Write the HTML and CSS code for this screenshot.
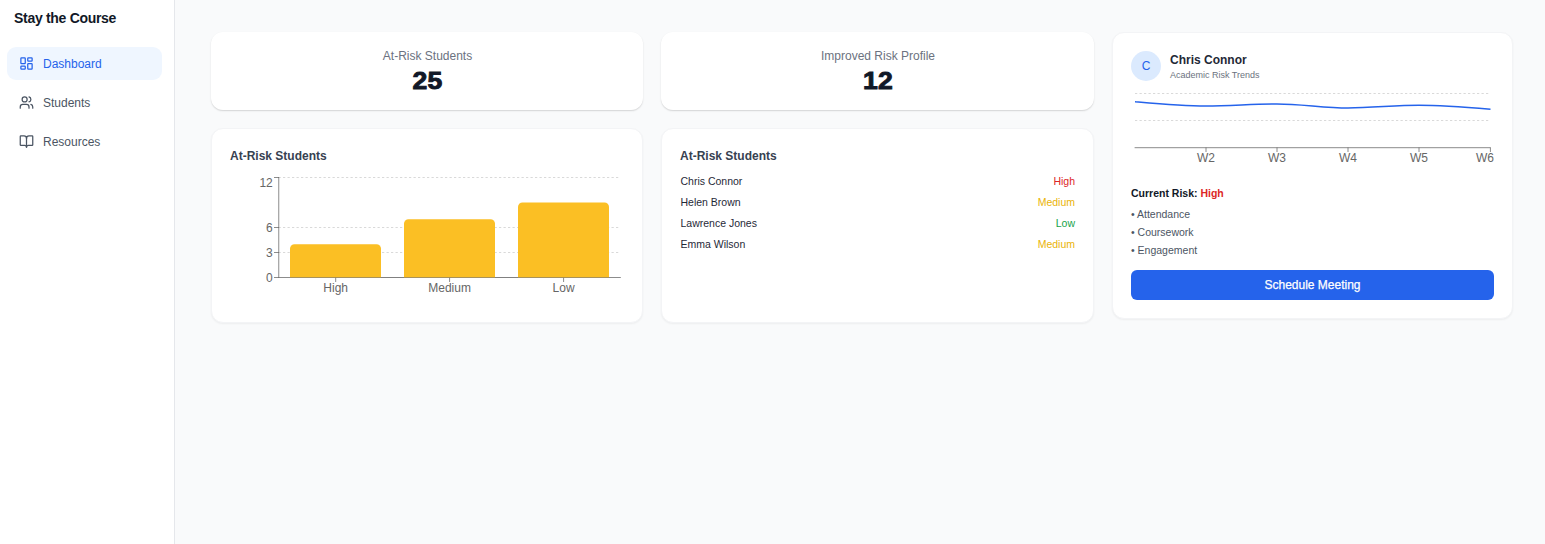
FILE: index.html
```html
<!DOCTYPE html>
<html lang="en">
<head>
<meta charset="utf-8">
<title>Stay the Course</title>
<link rel="stylesheet" href="styles.css">
</head>
<body>
<div class="app">
  <aside class="sidebar">
    <h1 class="brand">Stay the Course</h1>
    <nav class="nav">
      <a class="nav-item active">
        <svg class="icon" viewBox="0 0 24 24"><rect x="3" y="3" width="7" height="9" rx="1"/><rect x="14" y="3" width="7" height="5" rx="1"/><rect x="14" y="12" width="7" height="9" rx="1"/><rect x="3" y="16" width="7" height="5" rx="1"/></svg>
        <span>Dashboard</span>
      </a>
      <a class="nav-item">
        <svg class="icon" viewBox="0 0 24 24"><path d="M16 21v-2a4 4 0 0 0-4-4H6a4 4 0 0 0-4 4v2"/><circle cx="9" cy="7" r="4"/><path d="M22 21v-2a4 4 0 0 0-3-3.87"/><path d="M16 3.13a4 4 0 0 1 0 7.75"/></svg>
        <span>Students</span>
      </a>
      <a class="nav-item">
        <svg class="icon" viewBox="0 0 24 24"><path d="M12 7v14"/><path d="M3 18a1 1 0 0 1-1-1V4a1 1 0 0 1 1-1h5a4 4 0 0 1 4 4 4 4 0 0 1 4-4h5a1 1 0 0 1 1 1v13a1 1 0 0 1-1 1h-6a3 3 0 0 0-3 3 3 3 0 0 0-3-3z"/></svg>
        <span>Resources</span>
      </a>
    </nav>
  </aside>
  <main class="main">
    <div class="overview">
      <section class="stat">
        <div class="stat-label">At-Risk Students</div>
        <div class="stat-value">25</div>
      </section>
      <section class="stat">
        <div class="stat-label">Improved Risk Profile</div>
        <div class="stat-value">12</div>
      </section>
      <section class="card">
        <h2 class="card-title">At-Risk Students</h2>
        <svg class="bar-chart" viewBox="230 170 395 130">
          <g class="grid">
            <path d="M278.5 177.5H620.5M278.5 227.5H620.5M278.5 252.5H620.5"/>
          </g>
          <g class="axis">
            <path d="M278.75 177V278M274 177.5H279M274 227.5H279M274 252.5H279M274 277.5H620.8M335.7 277.5V282M449.6 277.5V282M563.6 277.5V282"/>
          </g>
          <g class="bars">
            <path d="M290 277.5V248.75a4.5 4.5 0 0 1 4.5-4.5H376.5a4.5 4.5 0 0 1 4.5 4.5V277.5z"/>
            <path d="M404 277.5V223.75a4.5 4.5 0 0 1 4.5-4.5H490.5a4.5 4.5 0 0 1 4.5 4.5V277.5z"/>
            <path d="M518 277.5V207a4.5 4.5 0 0 1 4.5-4.5H604.5a4.5 4.5 0 0 1 4.5 4.5V277.5z"/>
          </g>
          <path class="base" d="M290 277.5H609"/>
          <g class="ticks end">
            <text x="272.8" y="187">12</text><text x="272.8" y="232">6</text><text x="272.8" y="257">3</text><text x="272.8" y="282">0</text>
          </g>
          <g class="ticks mid">
            <text x="335.7" y="292">High</text><text x="449.6" y="292">Medium</text><text x="563.6" y="292">Low</text>
          </g>
        </svg>
      </section>
      <section class="card">
        <h2 class="card-title">At-Risk Students</h2>
        <ul class="students">
          <li><span>Chris Connor</span><span class="high">High</span></li>
          <li><span>Helen Brown</span><span class="medium">Medium</span></li>
          <li><span>Lawrence Jones</span><span class="low">Low</span></li>
          <li><span>Emma Wilson</span><span class="medium">Medium</span></li>
        </ul>
      </section>
    </div>
    <section class="card profile">
      <header class="profile-head">
        <div class="avatar">C</div>
        <div>
          <div class="profile-name">Chris Connor</div>
          <div class="profile-sub">Academic Risk Trends</div>
        </div>
      </header>
      <svg class="line-chart" viewBox="1131 90 365 78">
        <path class="grid" d="M1135 93.5H1490.5M1135 120.5H1490.5"/>
        <path class="axis" d="M1134.6 147.7H1490.6M1206 147.5V152M1277 147.5V152M1348 147.5V152M1419 147.5V152M1490.4 147.5V152"/>
        <path class="trend" d="M1135 101.7C1158.7 103.8 1182.3 106 1206 106C1229.7 106 1253.3 104 1277 104C1300.7 104 1324.3 108 1348 108C1371.7 108 1395.3 105.2 1419 105.2C1442.7 105.2 1466.7 107.2 1490.5 109.2"/>
        <g class="ticks mid">
          <text x="1206" y="162">W2</text><text x="1277" y="162">W3</text><text x="1348" y="162">W4</text><text x="1419" y="162">W5</text><text x="1485" y="162">W6</text>
        </g>
      </svg>
      <div class="risk">Current Risk: <span class="high">High</span></div>
      <ul class="factors">
        <li>• Attendance</li>
        <li>• Coursework</li>
        <li>• Engagement</li>
      </ul>
      <button class="button">Schedule Meeting</button>
    </section>
  </main>
</div>
</body>
</html>
```
FILE: styles.css
```css
* { box-sizing: border-box; margin: 0; padding: 0; }
body { font-family: "Liberation Sans", Arial, sans-serif; font-size: 12px; line-height: 18px; color: #111827; }
ul { list-style: none; }
.app { display: flex; height: 544px; background: #f9fafb; overflow: hidden; }
.sidebar { width: 175px; flex: none; background: #fff; border-right: 1px solid #e5e7eb; padding: 8px 12px 0 7px; }
.brand { font-size: 14px; line-height: 21px; padding-left: 7px; letter-spacing: -0.3px; }
.nav { display: flex; flex-direction: column; gap: 6px; margin-top: 18px; }
.nav-item { display: flex; align-items: center; gap: 9px; height: 33px; padding: 0 12px; border-radius: 9px; color: #4b5563; }
.nav-item.active { background: #eff6ff; color: #2563eb; }
.icon { width: 15px; height: 15px; fill: none; stroke: currentColor; stroke-width: 2; stroke-linecap: round; stroke-linejoin: round; }
.main { flex: 1; display: flex; align-items: flex-start; gap: 19px; padding: 32px 32px 0 36px; }
.overview { width: 883px; flex: none; display: grid; grid-template-columns: 432px 433px; grid-template-rows: 78px 195px; gap: 18px; }
.stat { background: #fff; border-radius: 12px; box-shadow: 0 1px 2px rgba(0,0,0,.1), 0 1px 1px rgba(0,0,0,.06); text-align: center; padding-top: 15px; }
.stat-label { color: #6b7280; padding-left: 1px; }
.stat-value { font-weight: 700; font-size: 23.5px; line-height: 33px; letter-spacing: .3px; padding-left: 1px; -webkit-text-stroke: .9px #111827; transform: scaleX(1.13); }
.card { background: #fff; border: 1px solid #f3f4f6; border-radius: 12px; box-shadow: 0 1px 2px rgba(0,0,0,.05); padding: 18px; }
.card-title { font-size: 12px; line-height: 18px; color: #374151; }
.bar-chart { display: block; width: 395px; height: 130px; margin-top: 5px; }
.grid { fill: none; stroke: #ccc; stroke-width: .75; stroke-dasharray: 2.25 2.25; }
.axis { fill: none; stroke: #666; stroke-width: .75; }
.bars { fill: #fbbf24; }
.base { stroke: #666; stroke-width: .75; opacity: .4; }
.ticks { fill: #666; font-size: 12px; }
.end { text-anchor: end; }
.mid { text-anchor: middle; }
.students { margin-top: 9px; padding-left: .5px; font-size: 10.5px; line-height: 15px; color: #1f2937; }
.students li { display: flex; justify-content: space-between; margin-bottom: 6px; }
.high { color: #dc2626; }
.medium { color: #eab308; }
.low { color: #16a34a; }
.profile { width: 401px; flex: none; height: 287px; margin-left: -1px; padding: 18px 17px 17px 18px; }
.profile-head { display: flex; gap: 9px; align-items: center; height: 30px; }
.avatar { width: 30px; height: 30px; border-radius: 50%; background: #dbeafe; color: #2563eb; text-align: center; line-height: 30px; }
.profile-name { font-weight: 700; line-height: 18px; color: #1f2937; }
.profile-sub { font-size: 9px; line-height: 12px; color: #6b7280; }
.line-chart { display: block; width: 365px; height: 78px; margin-top: 9px; }
.trend { fill: none; stroke: #2563eb; stroke-width: 1.5; }
.risk { font-size: 10.5px; font-weight: 700; line-height: 15px; margin-top: 18px; }
.factors { font-size: 10.5px; line-height: 15px; color: #4b5563; margin-top: 6px; }
.factors li { margin-bottom: 3px; }
.button { display: block; width: 363px; height: 30px; margin-top: 12px; border: 0; border-radius: 6px; background: #2563eb; color: #fff; font: 12px "Liberation Sans", Arial, sans-serif; -webkit-text-stroke: .25px #fff; }
```
